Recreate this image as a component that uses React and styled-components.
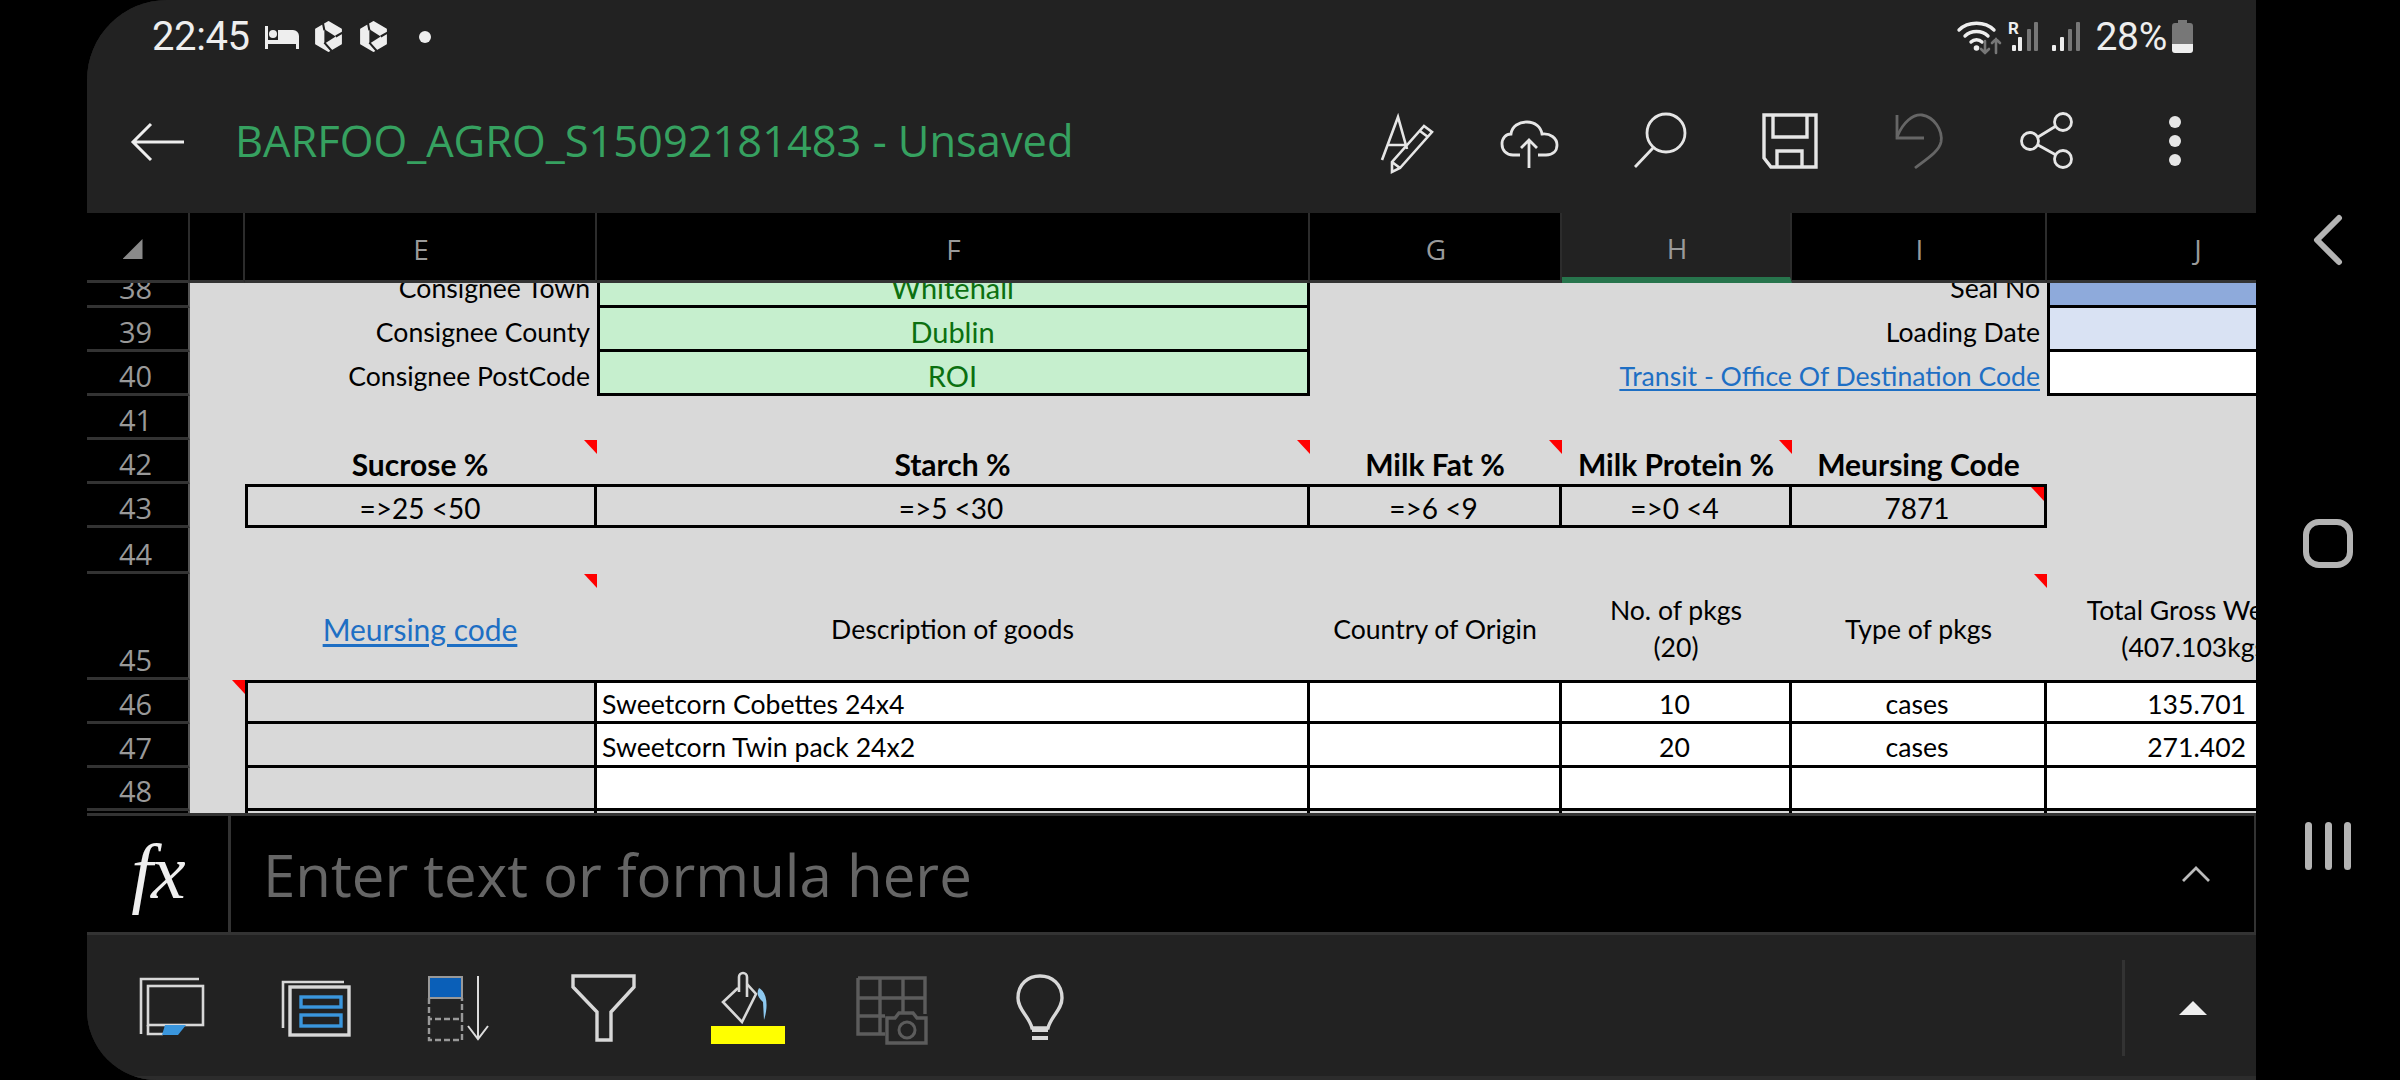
import React from "react";
import styled, { createGlobalStyle } from "styled-components";

const COLS = "103px 55px 352px 713px 252px 230px 255px 302px";
const CELL_FONT = `"Lato", "Liberation Sans", sans-serif`;
const UI_FONT = `"Open Sans", "Liberation Sans", sans-serif`;

const Global = createGlobalStyle`
  html, body { margin: 0; padding: 0; background: #000; }
  #root { width: 2400px; height: 1080px; }
`;
const Screen = styled.div`
  width: 2400px; height: 1080px; background: #000; display: flex; overflow: hidden;
`;
const Bezel = styled.div`width: 87px; flex: none; background: #000;`;
const Phone = styled.main`
  width: 2169px; height: 1080px; flex: none; display: flex; flex-direction: column;
  background: #222; overflow: hidden;
  border-radius: 80px 0 0 70px;
`;
const NavColumn = styled.nav`
  width: 144px; flex: none; display: flex; flex-direction: column; align-items: center;
  padding-top: 215px; gap: 254px; box-sizing: border-box;
`;
const Header = styled.header`height: 213px; flex: none; background: #222;`;
const StatusBar = styled.div`
  height: 72px; display: flex; align-items: center; padding: 1px 63px 0 65px; box-sizing: border-box;
`;
const Time = styled.span`
  font: 400 40px "Roboto", sans-serif; color: #eee; margin-right: 15px; letter-spacing: -0.4px;
`;
const StatusLeft = styled.div`display: flex; align-items: center; gap: 14px;`;
const StatusRight = styled.div`margin-left: auto; display: flex; align-items: center; gap: 5px;`;
const Percent = styled.span`font: 400 39px "Roboto", sans-serif; color: #eee; margin-left: 9px; letter-spacing: -0.3px;`;
const AppBar = styled.div`
  height: 141px; display: flex; align-items: center; padding: 0 49px 2px 43px; box-sizing: border-box;
`;
const Title = styled.h1`
  margin: 0 0 3px 51px; font: 400 43.400px ${UI_FONT}; color: #36a160; white-space: nowrap;
`;
const AppActions = styled.div`margin-left: auto; display: flex; gap: 64px;`;
const ColRow = styled.div`
  display: grid; grid-template-columns: ${COLS}; height: 70px; flex: none; background: #000;
`;
const ColHead = styled.div`
  box-sizing: border-box; display: flex; align-items: center; justify-content: center; padding: 5px 0 0 2px;
  border-right: 2px solid #2c2c2c; border-bottom: ${p => (p.$active ? "6px solid #27744c" : "3px solid #333")};
  background: ${p => (p.$active ? "#222" : "#000")};
  color: #9a9a9a; font: 400 28px ${UI_FONT}; height: 70px;
`;
const CornerMark = styled.span`
  width: 20px; height: 20px; background: #8a8a8a; clip-path: polygon(100% 0, 100% 100%, 0 100%);
  margin-left: -12px;
`;
const Viewport = styled.section`
  height: 530px; flex: none; overflow: hidden; background: #d9d9d9;
`;
const Rows = styled.div`margin-top: -19px;`;
const SheetRow = styled.div`
  display: grid; grid-template-columns: ${COLS}; grid-template-rows: ${p => p.$h}px; height: ${p => p.$h}px;
`;
const RowNum = styled.div`
  box-sizing: border-box; background: #000; color: #999; font: 400 29px ${UI_FONT};
  display: flex; justify-content: center; align-items: flex-end; padding: 0 4px 0 0; line-height: 35px;
  border-bottom: 3px solid #333; border-right: 2px solid #555; min-height: 0;
`;
const edge = (on) => (on ? "3px solid #000" : "0 none");
const topPad = (edges) => {
  if (edges?.includes("t")) return 5;
  return edges?.includes("b") ? 6 : 4;
};
const Cell = styled.div`
  position: relative; box-sizing: border-box; min-width: 0; min-height: 0; white-space: nowrap;
  grid-column: span ${p => p.$span || 1};
  display: flex; align-items: center;
  padding: ${p => topPad(p.$edges)}px ${p => p.$pr ?? 7}px 0 5px;
  justify-content: ${p => (p.$align === "right" ? "flex-end" : p.$align === "left" ? "flex-start" : "center")};
  background: ${p => p.$fill || "#d9d9d9"};
  color: ${p => p.$tone || "#000"};
  font: ${p => (p.$bold ? 700 : 400)} ${p => p.$size || 26.6}px/37px ${CELL_FONT};
  text-align: center;
  border-left: ${p => edge(p.$edges?.includes("l"))};
  border-right: ${p => edge(p.$edges?.includes("r"))};
  border-top: ${p => edge(p.$edges?.includes("t"))};
  border-bottom: ${p => edge(p.$edges?.includes("b"))};
`;
const SheetLink = styled.span`color: #1e6fc4; text-decoration: underline; text-underline-offset: 3px;`;
const Note = styled.i`
  position: absolute; top: 0; right: 0; width: 13px; height: 14px; background: #f00;
  clip-path: polygon(0 0, 100% 0, 100% 100%); z-index: 2;
`;
const FormulaBar = styled.section`
  height: 122px; flex: none; display: flex; align-items: center; background: #000; box-sizing: border-box;
  border-top: 3px solid #333; border-bottom: 3px solid #333; border-right: 2px solid #333;
`;
const FxCell = styled.div`
  width: 144px; height: 100%; flex: none; box-sizing: border-box; border-right: 3px solid #333;
  display: flex; align-items: center; justify-content: center; padding-bottom: 4px;
  font: italic 400 78px "Liberation Serif", serif; color: #eee; letter-spacing: -2px;
`;
const Placeholder = styled.span`
  margin-left: 32px; font: 400 58.200px ${UI_FONT}; color: #666; white-space: nowrap;
`;
const ChevronSlot = styled.div`margin-left: auto; margin-right: 44px; display: flex;`;
const Toolbar = styled.section`
  flex: 1; display: flex; align-items: center; background: #222; padding: 5px 49px 0 13px; box-sizing: border-box;
  border-bottom: 4px solid #2c2c2c;
`;
const ToolSlot = styled.div`
  width: 144px; display: flex; justify-content: center; flex: none;
`;
const ToolEnd = styled.div`
  margin-left: auto; height: 96px; width: 85px; display: flex; align-items: center; justify-content: flex-end;
  border-left: 3px solid #333; box-sizing: border-box;
`;
const Svg = styled.svg`display: block; flex: none; fill: none; overflow: visible; margin-left: ${p => p.$ml || 0}px;`;

const BedIcon = () => (
  <Svg width="34" height="24" viewBox="0 0 34 24">
    <path fill="#eee" d="M0 1h3v14h10V5h15a6 6 0 0 1 6 6v13h-3v-5H3v5H0z" />
    <circle cx="8" cy="9" r="4" fill="#eee" />
  </Svg>
);
const CycleIcon = () => (
  <Svg width="31" height="33" viewBox="1 0 28 32">
    <path fill="#eee" stroke="#eee" strokeWidth="2" strokeLinejoin="round" d="M15 2l12 7v14l-12 7-12-7V9z" />
    <path fill="#222" d="M11 9l11 7-11 7z" />
    <path stroke="#222" strokeWidth="2" d="M11 10L9 0M22 16l7-4M11 22l8 9" />
  </Svg>
);
const Dot = styled.span`width: 12px; height: 12px; border-radius: 50%; background: #eee; margin-left: 16px;`;
const WifiIcon = () => (
  <Svg width="46" height="34" viewBox="0 0 46 34" strokeLinecap="round">
    <path stroke="#eee" strokeWidth="3.400" d="M2 10C11 1 28 1 37 10M8 16c6-6 17-6 23 0M14 22c3-3 8-3 11 0" />
    <circle cx="19.500" cy="28" r="2.800" fill="#eee" />
    <path stroke="#777" strokeWidth="2.600" d="M28 21v12M24 29l4 4 4-4M39 33V19M35 23l4-4 4 4" />
  </Svg>
);
const bar = (x, h, c) => <rect key={x} x={x} y={31 - h} width="4" height={h} rx="1" fill={c} />;
const RoamIcon = () => (
  <Svg width="31" height="34" viewBox="0 0 31 34">
    {bar(4, 6, "#eee")}{bar(10, 14, "#eee")}{bar(19, 22, "#777")}{bar(26, 29, "#777")}
    <text x="0" y="14" fontFamily="Roboto, sans-serif" fontWeight="700" fontSize="17" fill="#eee">R</text>
  </Svg>
);
const BarsIcon = () => (
  <Svg $ml={7} width="30" height="34" viewBox="0 0 30 34">
    {bar(1, 6, "#eee")}{bar(9, 14, "#eee")}{bar(17, 22, "#777")}{bar(25, 29, "#777")}
  </Svg>
);
const BatteryIcon = () => (
  <Svg width="21" height="33" viewBox="0 0 21 33">
    <path fill="#777" d="M6 0h9v3h3a3 3 0 0 1 3 3v18H0V6a3 3 0 0 1 3-3h3z" />
    <path fill="#eee" d="M0 24h21v6a3 3 0 0 1-3 3H3a3 3 0 0 1-3-3z" />
  </Svg>
);
const BackIcon = () => (
  <Svg width="54" height="40" viewBox="0 0 54 40" stroke="#eee" strokeWidth="3">
    <path d="M54 20H3M21 2L3 20l18 18" />
  </Svg>
);
const Act = ({ children, c = "#e6e6e6", w = 2.800 }) => (
  <Svg width="64" height="64" viewBox="0 0 64 64" stroke={c} strokeWidth={w}>{children}</Svg>
);
const FontIcon = () => (
  <Act w={2.600}>
    <path d="M7 50L23 7l9 32M12 35h18" />
    <path d="M17 62V52L49 16l8 6-32 36zM45 21l8 6M17 52l8 6" />
  </Act>
);
const CloudIcon = () => (
  <Act>
    <g transform="translate(-3 0)">
      <path d="M20 45h-7C6 45 2 40 2 34c0-6 4-10 9-10 1-8 8-12 16-12s14 5 15 12c8-1 15 4 15 11 0 6-4 10-11 10h-8" />
      <path d="M29 58V30M21 38l8-8 8 8" />
    </g>
  </Act>
);
const SearchIcon = () => (
  <Act>
    <g transform="translate(-2 0)">
      <circle cx="37" cy="23" r="19" /><path d="M24 38L6 57" />
    </g>
  </Act>
);
const SaveIcon = () => (
  <Act w={3.400}>
    <path d="M5 5h52v52H12l-7-9z" /><path d="M14 5v22h34V5M18 57V41h25v16" />
  </Act>
);
const UndoIcon = () => (
  <Act c="#666">
    <path d="M10 5v23h27" /><path d="M10 27C16 12 26 4 35 5c12 2 21 15 19 27-2 10-16 18-26 26" />
  </Act>
);
const ShareIcon = () => (
  <Act>
    <circle cx="48" cy="12" r="8.500" /><circle cx="15" cy="31" r="8.500" /><circle cx="48" cy="49" r="8.500" />
    <path d="M23 27l18-11M23 35l18 10" />
  </Act>
);
const KebabIcon = () => (
  <Svg width="64" height="64" viewBox="0 0 64 64">
    <circle cx="32" cy="12" r="6" fill="#e6e6e6" /><circle cx="32" cy="31" r="6" fill="#e6e6e6" /><circle cx="32" cy="50" r="6" fill="#e6e6e6" />
  </Svg>
);
const Tool = ({ children }) => (
  <ToolSlot><Svg width="80" height="80" viewBox="0 0 80 80" stroke="#d8d8d8" strokeWidth="2.600">{children}</Svg></ToolSlot>
);
const SheetsTool = () => (
  <Tool>
    <path d="M9 66V11h58" /><rect x="16" y="18" width="55" height="39" />
    <path d="M16 57v9h15" />
    <path fill="#3a96dd" stroke="none" d="M33 57h21l-8 10H30z" />
  </Tool>
);
const ViewsTool = () => (
  <Tool>
    <path d="M7 60V14h61" /><rect x="14" y="19" width="59" height="48" strokeWidth="3.400" />
    <rect x="25" y="29" width="40" height="10" stroke="#3a96dd" strokeWidth="3.400" />
    <rect x="25" y="47" width="40" height="11" stroke="#3a96dd" strokeWidth="3.400" />
  </Tool>
);
const SortTool = () => (
  <Tool>
    <rect x="9" y="9" width="33" height="21" fill="#0a5fb8" stroke="#999" strokeWidth="2" />
    <path stroke="#999" strokeDasharray="6 3" strokeWidth="2.400" d="M9 30v21h33V30M9 51v21h33V51" />
    <path stroke="#ddd" strokeWidth="2" d="M58 8v63M48 58l10 13 10-13" />
  </Tool>
);
const FilterTool = () => (
  <Tool><path d="M9 8h61v11L47 44v28H33V44L9 19z" strokeWidth="3.400" /></Tool>
);
const FillTool = () => (
  <Tool>
    <path d="M31 24V9a4 4 0 0 1 8 0v20" />
    <path d="M30 20L15 34l19 20 14-28-9-10" />
    <path fill="#8ec9f0" stroke="none" d="M51 20c-3 5-1 10 4 14l1 18c4-12 4-27-5-32z" />
    <rect x="3" y="58" width="74" height="18" fill="#ff0" stroke="none" />
  </Tool>
);
const CameraTool = () => (
  <Tool>
    <path stroke="#5c5c5c" strokeWidth="3.400" d="M6 10h67v36M6 10v56h27M6 30h67M6 48h27M28 10v56M51 10v36" />
    <path stroke="#5c5c5c" strokeWidth="3.400" fill="#222" d="M35 50h8l4-5h14l4 5h9v25H35z" />
    <circle cx="55" cy="62" r="8" stroke="#5c5c5c" strokeWidth="3" />
  </Tool>
);
const BulbTool = () => (
  <Tool>
    <g transform="translate(4 0)">
      <path strokeWidth="3.400" d="M40 8C28 8 18 16 18 30c0 12 11 18 14 30h16c3-12 14-18 14-30C62 16 52 8 40 8z" />
      <path strokeWidth="4" d="M32 62h16M32 70h16" />
    </g>
  </Tool>
);
const UpChevron = () => (
  <Svg width="28" height="16" viewBox="0 0 28 16" stroke="#bbb" strokeWidth="2.800"><path d="M1 15L14 2l13 13" /></Svg>
);
const UpTriangle = () => (
  <Svg width="28" height="14" viewBox="0 0 28 14"><path d="M14 0l14 14H0z" fill="#eee" /></Svg>
);
const NavBack = () => (
  <Svg width="30" height="50" viewBox="0 0 30 50" stroke="#b4b4b4" strokeWidth="6" strokeLinecap="round" strokeLinejoin="round">
    <path d="M26 3L4 25l22 22" />
  </Svg>
);
const NavHome = styled.div`
  width: 50px; height: 49px; box-sizing: border-box; border: 6px solid #b4b4b4; border-radius: 16px;
`;
const NavRecents = () => (
  <Svg width="46" height="48" viewBox="0 0 46 48">
    <rect x="0" y="0" width="7" height="48" rx="3.500" fill="#b4b4b4" /><rect x="20" y="0" width="7" height="48" rx="3.500" fill="#b4b4b4" /><rect x="39" y="0" width="7" height="48" rx="3.500" fill="#b4b4b4" />
  </Svg>
);

const GREEN = "#c6efce";
const GREEN_TEXT = "#0b7010";
const VALUE_PAD = 100;

export default function App() {
  return (
    <Screen>
      <Global />
      <Bezel />
      <Phone>
        <Header>
          <StatusBar>
            <Time>22:45</Time>
            <StatusLeft><BedIcon /><CycleIcon /><CycleIcon /><Dot /></StatusLeft>
            <StatusRight>
              <WifiIcon /><RoamIcon /><BarsIcon /><Percent>28%</Percent><BatteryIcon />
            </StatusRight>
          </StatusBar>
          <AppBar>
            <BackIcon />
            <Title>BARFOO_AGRO_S15092181483 - Unsaved</Title>
            <AppActions>
              <FontIcon /><CloudIcon /><SearchIcon /><SaveIcon /><UndoIcon /><ShareIcon /><KebabIcon />
            </AppActions>
          </AppBar>
        </Header>
        <ColRow>
          <ColHead><CornerMark /></ColHead>
          <ColHead />
          <ColHead>E</ColHead>
          <ColHead>F</ColHead>
          <ColHead>G</ColHead>
          <ColHead $active>H</ColHead>
          <ColHead>I</ColHead>
          <ColHead>J</ColHead>
        </ColRow>
        <Viewport>
          <Rows>
            <SheetRow $h={44}>
              <RowNum>38</RowNum><Cell />
              <Cell $align="right">Consignee Town</Cell>
              <Cell $size={29} $fill={GREEN} $tone={GREEN_TEXT} $edges="lrb">Whitehall</Cell>
              <Cell $span={3} $align="right">Seal No</Cell>
              <Cell $fill="#8eaadb" $edges="lb" />
            </SheetRow>
            <SheetRow $h={44}>
              <RowNum>39</RowNum><Cell />
              <Cell $align="right">Consignee County</Cell>
              <Cell $size={29} $fill={GREEN} $tone={GREEN_TEXT} $edges="lrb">Dublin</Cell>
              <Cell $span={3} $align="right">Loading Date</Cell>
              <Cell $fill="#d9e2f3" $edges="lb" />
            </SheetRow>
            <SheetRow $h={44}>
              <RowNum>40</RowNum><Cell />
              <Cell $align="right">Consignee PostCode</Cell>
              <Cell $size={29} $fill={GREEN} $tone={GREEN_TEXT} $edges="lrb">ROI</Cell>
              <Cell $span={3} $align="right"><SheetLink>Transit - Office Of Destination Code</SheetLink></Cell>
              <Cell $fill="#fff" $edges="lb" />
            </SheetRow>
            <SheetRow $h={44}>
              <RowNum>41</RowNum><Cell /><Cell /><Cell /><Cell $span={3} /><Cell />
            </SheetRow>
            <SheetRow $h={44}>
              <RowNum>42</RowNum><Cell />
              <Cell $bold $size={30}>Sucrose %<Note /></Cell>
              <Cell $bold $size={30}>Starch %<Note /></Cell>
              <Cell $bold $size={30}>Milk Fat %<Note /></Cell>
              <Cell $bold $size={30}>Milk Protein %<Note /></Cell>
              <Cell $bold $size={30}>Meursing Code</Cell>
              <Cell />
            </SheetRow>
            <SheetRow $h={44}>
              <RowNum>43</RowNum><Cell />
              <Cell $size={28} $edges="ltrb">=&gt;25 &lt;50</Cell>
              <Cell $size={28} $edges="trb">=&gt;5 &lt;30</Cell>
              <Cell $size={28} $edges="trb">=&gt;6 &lt;9</Cell>
              <Cell $size={28} $edges="trb">=&gt;0 &lt;4</Cell>
              <Cell $size={28} $edges="trb">7871<Note /></Cell>
              <Cell />
            </SheetRow>
            <SheetRow $h={46}>
              <RowNum>44</RowNum><Cell /><Cell /><Cell /><Cell $span={3} /><Cell />
            </SheetRow>
            <SheetRow $h={106}>
              <RowNum>45</RowNum><Cell />
              <Cell $size={30}><SheetLink>Meursing code</SheetLink><Note /></Cell>
              <Cell>Description of goods</Cell>
              <Cell>Country of Origin</Cell>
              <Cell><span>No. of pkgs<br />(20)</span></Cell>
              <Cell>Type of pkgs<Note /></Cell>
              <Cell><span>Total Gross Weight<br />(407.103kgs)</span></Cell>
            </SheetRow>
            <SheetRow $h={44}>
              <RowNum>46</RowNum><Cell><Note /></Cell>
              <Cell $edges="ltrb" />
              <Cell $fill="#fff" $edges="trb" $align="left">Sweetcorn Cobettes 24x4</Cell>
              <Cell $fill="#fff" $edges="trb" />
              <Cell $fill="#fff" $edges="trb">10</Cell>
              <Cell $fill="#fff" $edges="trb">cases</Cell>
              <Cell $fill="#fff" $edges="trb" $align="right" $pr={VALUE_PAD}>135.701</Cell>
            </SheetRow>
            <SheetRow $h={44}>
              <RowNum>47</RowNum><Cell />
              <Cell $edges="lrb" />
              <Cell $fill="#fff" $edges="rb" $align="left">Sweetcorn Twin pack 24x2</Cell>
              <Cell $fill="#fff" $edges="rb" />
              <Cell $fill="#fff" $edges="rb">20</Cell>
              <Cell $fill="#fff" $edges="rb">cases</Cell>
              <Cell $fill="#fff" $edges="rb" $align="right" $pr={VALUE_PAD}>271.402</Cell>
            </SheetRow>
            <SheetRow $h={43}>
              <RowNum>48</RowNum><Cell />
              <Cell $edges="lrb" />
              <Cell $fill="#fff" $edges="rb" /><Cell $fill="#fff" $edges="rb" /><Cell $fill="#fff" $edges="rb" /><Cell $fill="#fff" $edges="rb" /><Cell $fill="#fff" $edges="rb" />
            </SheetRow>
            <SheetRow $h={12}>
              <RowNum /><Cell /><Cell $edges="lr" /><Cell $edges="r" /><Cell $edges="r" /><Cell $edges="r" /><Cell $edges="r" /><Cell />
            </SheetRow>
          </Rows>
        </Viewport>
        <FormulaBar>
          <FxCell>fx</FxCell>
          <Placeholder>Enter text or formula here</Placeholder>
          <ChevronSlot><UpChevron /></ChevronSlot>
        </FormulaBar>
        <Toolbar>
          <SheetsTool /><ViewsTool /><SortTool /><FilterTool /><FillTool /><CameraTool /><BulbTool />
          <ToolEnd><UpTriangle /></ToolEnd>
        </Toolbar>
      </Phone>
      <NavColumn><NavBack /><NavHome /><NavRecents /></NavColumn>
    </Screen>
  );
}
